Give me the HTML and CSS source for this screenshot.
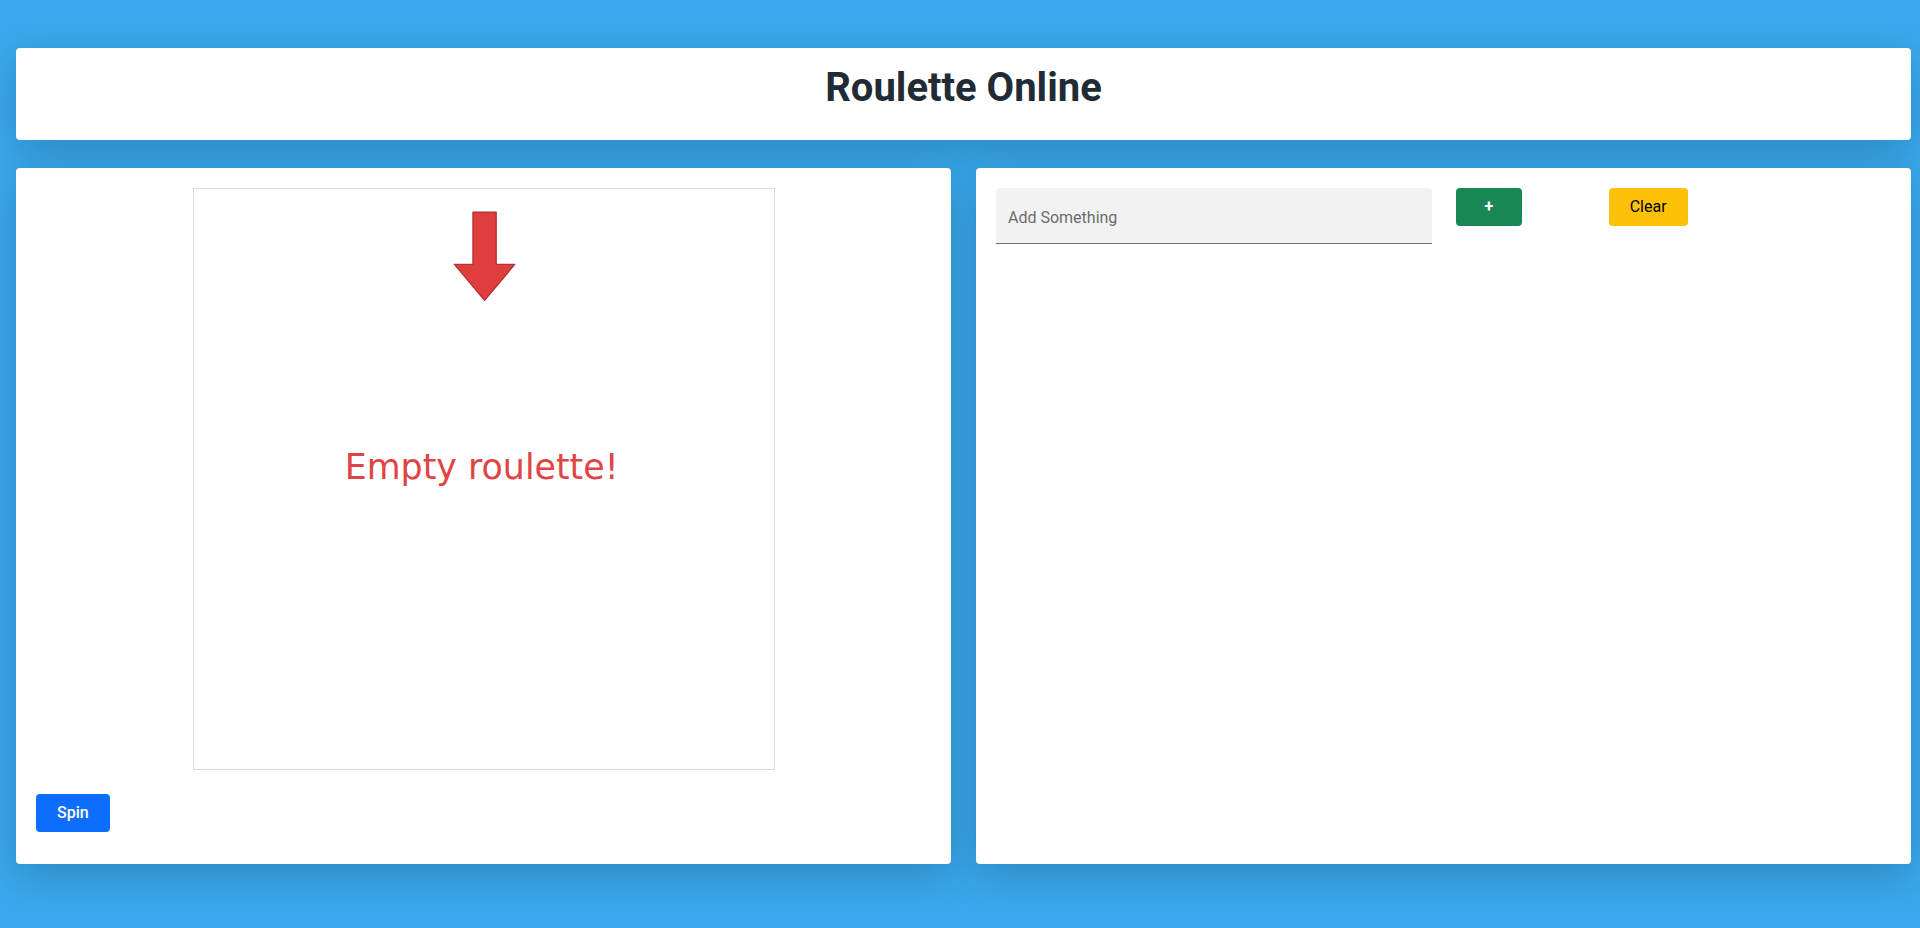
FILE: index.html
```html
<!DOCTYPE html>
<html lang="en">
<head>
  <meta charset="UTF-8" />
  <meta name="viewport" content="width=device-width, initial-scale=1.0"/>
  <title>Roulette Online</title>
  <link rel="stylesheet" href="styles.css">
</head>
<body>
  <div class="page">
    <header class="card title-card">
      <h1>Roulette Online</h1>
    </header>
    <main class="panels">
      <section class="card panel">
        <div class="wheel">
          <svg class="wheel-canvas" viewBox="0 0 500 500" width="580" height="580">
            <path d="M240.5 20 H260.5 V65 H276.5 L250.5 96 L224.5 65 H240.5 Z" fill="#e03d3d" stroke="#b33434" stroke-width="1.2" stroke-linejoin="round"/>
            <text x="248" y="250" text-anchor="middle" class="empty-text">Empty roulette!</text>
          </svg>
        </div>
        <button class="btn btn-spin">Spin</button>
      </section>
      <section class="card panel">
        <div class="add-row">
          <div class="col col-6">
            <input type="text" class="field" placeholder="Add Something" />
          </div>
          <div class="col col-2">
            <button class="btn btn-add">+</button>
          </div>
          <div class="col col-2">
            <button class="btn btn-clear">Clear</button>
          </div>
        </div>
      </section>
    </main>
  </div>
</body>
</html>
```

FILE: styles.css
```css
html, body {
  margin: 0;
  padding: 0;
  height: 100%;
}
body {
  background: #39a8ec;
  font-family: Roboto, 'Liberation Sans', Arial, sans-serif;
  color: #212529;
}
.page {
  padding: 48px 9px 0 16px;
}
.card {
  background: #ffffff;
  border-radius: 4px;
  box-shadow: 0 12px 40px rgba(0,0,0,0.18);
  box-sizing: border-box;
}
.title-card {
  padding: 16px 16px 20px;
  text-align: center;
}
h1 {
  margin: 0 0 8px;
  font-size: 40px;
  font-weight: 700;
  line-height: 1.2;
  color: #212b36;
}
.panels {
  display: grid;
  grid-template-columns: 1fr 1fr;
  gap: 25px;
  margin-top: 28px;
}
.panel {
  height: 696px;
  padding: 20px;
}
.wheel {
  display: flex;
  justify-content: center;
}
.wheel-canvas {
  display: block;
  border: 1px solid #d9d9d9;
}
.empty-text {
  font-family: 'DejaVu Sans', Verdana, sans-serif;
  font-size: 30px;
  fill: #e04444;
}
.btn {
  display: inline-block;
  font-family: inherit;
  font-size: 16px;
  line-height: 24px;
  padding: 6px 20px;
  border: 1px solid transparent;
  border-radius: 4px;
  cursor: pointer;
}
.btn-spin {
  margin-top: 24px;
  background: #0d6efd;
  color: #fff;
  font-weight: 500;
}
.btn-add {
  background: #198754;
  color: #fff;
  font-weight: 700;
  padding: 6px 28px;
}
.btn-clear {
  background: #ffc107;
  color: #000;
  font-weight: 400;
}
.add-row {
  display: flex;
  margin: 0 -12px;
}
.col {
  box-sizing: border-box;
  padding: 0 12px;
}
.col-6 {
  flex: 0 0 50%;
}
.col-2 {
  flex: 0 0 16.6667%;
}
.field {
  width: 100%;
  height: 56px;
  box-sizing: border-box;
  padding: 3px 12px 0;
  font-family: inherit;
  font-size: 16px;
  color: #212529;
  background: #f2f2f2;
  border: none;
  border-bottom: 1px solid #6e6e6e;
  border-radius: 4px 4px 0 0;
  outline: none;
}
.field::placeholder {
  color: #6c6c6c;
}
```
